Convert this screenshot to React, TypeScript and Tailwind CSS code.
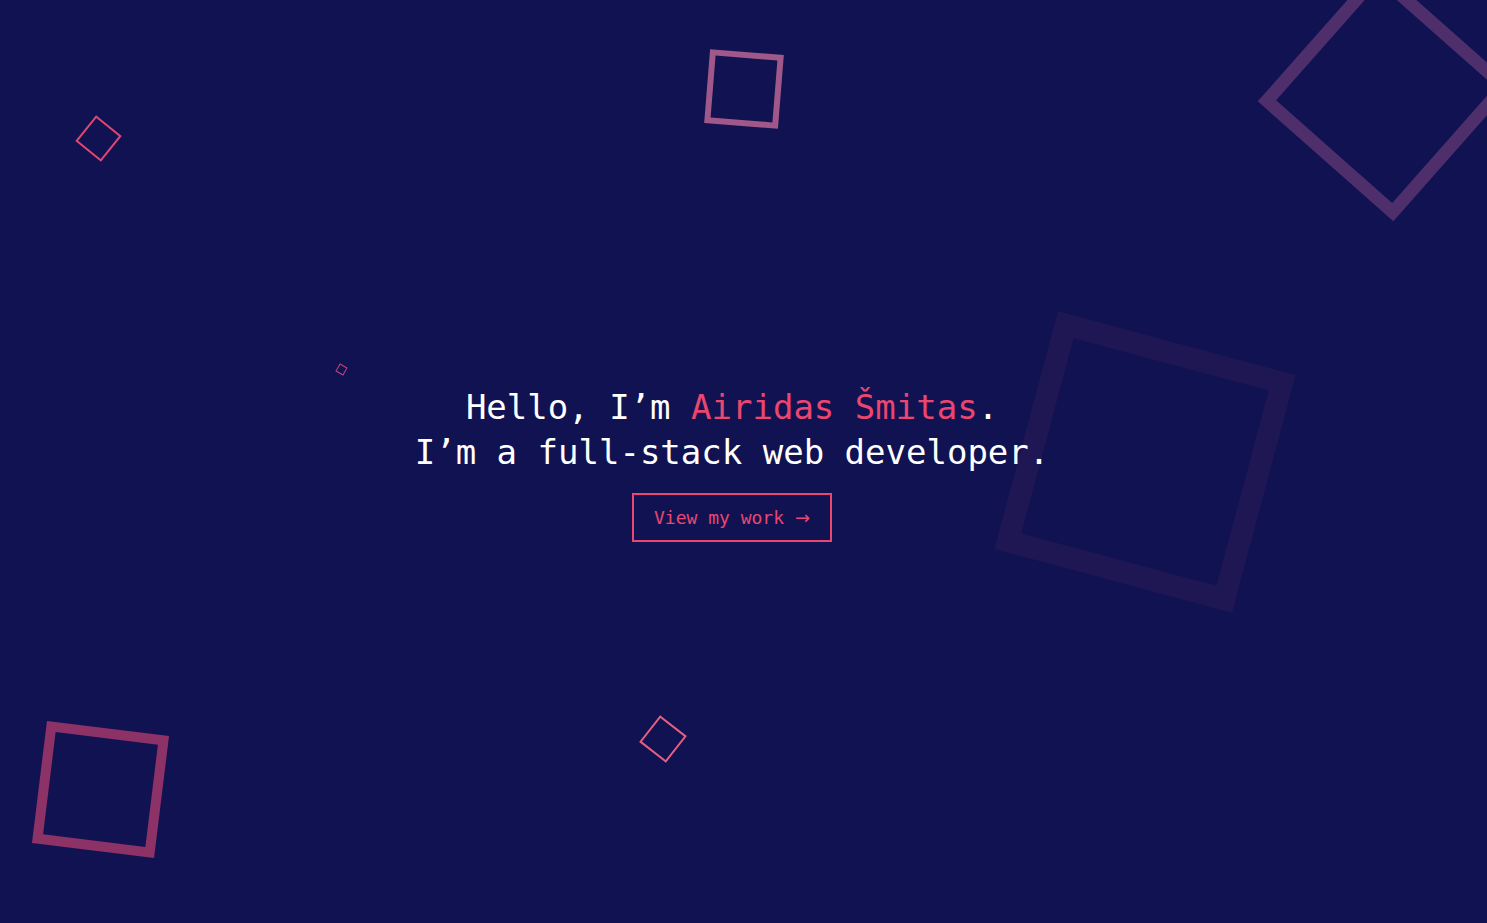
export default function App() {
  return (
    <div className="relative h-[923px] w-full overflow-hidden bg-[#111252]">
      {/* floating squares */}
      <div className="absolute left-[1022px] top-[339px] h-[246px] w-[246px] rotate-[15deg] border-[22px] border-[#1f1753]" />
      <div className="absolute left-[1295px] top-[3px] h-[181px] w-[181px] rotate-[41.5deg] border-[13px] border-[#4f2f6b]" />
      <div className="absolute left-[707px] top-[52px] h-[74px] w-[74px] rotate-[4.6deg] border-[6px] border-[#a0588a]" />
      <div className="absolute left-[82px] top-[122px] h-[33px] w-[33px] rotate-[39deg] border-2 border-[#e2466f]" />
      <div className="absolute left-[337px] top-[365px] h-[9px] w-[9px] rotate-[30deg] border border-[#c0457a]" />
      <div className="absolute left-[646px] top-[722px] h-[34px] w-[34px] rotate-[38deg] border-2 border-[#e5607e]" />
      <div className="absolute left-[39px] top-[728px] h-[123px] w-[123px] rotate-[7deg] border-[10px] border-[#8c3266]" />

      {/* hero */}
      <div className="relative flex h-full flex-col items-center justify-center pr-[23px] pt-[4px] font-['DejaVu_Sans_Mono',monospace]">
        <h1 className="text-center text-[34px] leading-[45px] font-normal text-white">
          Hello, I’m <span className="text-[#ea466f]">Airidas Šmitas</span>.
          <br />
          I’m a full-stack web developer.
        </h1>
        <button className="mt-[18px] border-2 border-[#ea466f] px-5 py-[9px] text-[18px] leading-[27px] text-[#ea466f]">
          View my work <span className="font-['DejaVu_Sans',sans-serif]">→</span>
        </button>
      </div>
    </div>
  )
}
